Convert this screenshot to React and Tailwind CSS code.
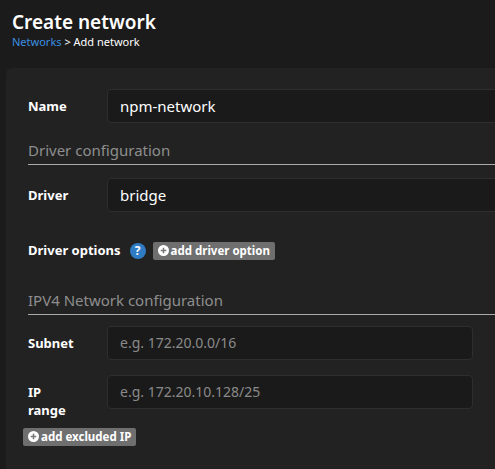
import React from "react";

const PlusCircle = () => (
    <svg width="11" height="11" viewBox="0 0 16 16" className="mr-[2px]">
        <circle cx="8" cy="8" r="8" fill="#fff" />
        <path d="M8 4v8M4 8h8" stroke="#777" strokeWidth="2.2" />
    </svg>
);

const AddButton = ({ label, className }) => (
    <button className={`flex items-center h-[18px] px-[5px] rounded-[2px] bg-[#6f6f6f] text-white text-[11.5px] font-bold ${className}`}>
        <PlusCircle />
        {label}
    </button>
);

const Field = ({ label, value, placeholder, top, wide }) => (
    <div className={`flex items-center ${top}`}>
        <div className="w-[79px] shrink-0 text-[13px] font-bold text-white leading-[18px]">{label}</div>
        <div className={`h-[34px] shrink-0 flex items-center px-[12px] rounded-[4px] border border-[#2e2e2e] bg-[#1a1a1a] ${wide ? "w-[420px]" : "w-[366px]"}`}>
            {value ? (
                <span className="text-[15px] text-white">{value}</span>
            ) : (
                <span className="text-[14px] text-[#8a8a8a]">{placeholder}</span>
            )}
        </div>
    </div>
);

const Section = ({ title, top }) => (
    <div className={`${top} border-b border-[#aaa] pb-[2px] -mr-[20px]`}>
        <span className="text-[15px] text-[#8e8e8e]">{title}</span>
    </div>
);

export default function App() {
    return (
        <div className="w-[495px] h-[469px] overflow-hidden bg-[#1b1b1b] font-['Open_Sans',sans-serif]">
            <div className="pl-[12px] pt-[10px]">
                <h1 className="text-[19px] font-semibold text-white leading-[24px]">Create network</h1>
                <div className="text-[11px] text-white leading-[16px]">
                    <span className="text-[#3b8fe0]">Networks</span> &gt; Add network
                </div>
            </div>
            <div className="ml-[6px] mt-[18px] h-[420px] overflow-hidden rounded-tl-[6px] bg-[#222222] pl-[22px] pt-[21px]">
                <Field label="Name" value="npm-network" wide />
                <Section title="Driver configuration" top="mt-[15px]" />
                <Field label="Driver" value="bridge" wide top="mt-[13px]" />
                <div className="flex items-center mt-[29px]">
                    <span className="text-[13px] font-bold text-white">Driver options</span>
                    <span className="ml-[9px] w-[16px] h-[16px] rounded-full bg-[#2f7bc4] text-white text-[12px] font-bold flex items-center justify-center">?</span>
                    <AddButton label="add driver option" className="ml-[7px]" />
                </div>
                <Section title="IPV4 Network configuration" top="mt-[27px]" />
                <Field label="Subnet" placeholder="e.g. 172.20.0.0/16" top="mt-[11px]" />
                <Field label={<>IP<br />range</>} placeholder="e.g. 172.20.10.128/25" top="mt-[15px] !items-start [&>div:first-child]:pt-[8px]" />
                <AddButton label="add excluded IP" className="-ml-[5px] mt-[9px]" />
            </div>
        </div>
    );
}
